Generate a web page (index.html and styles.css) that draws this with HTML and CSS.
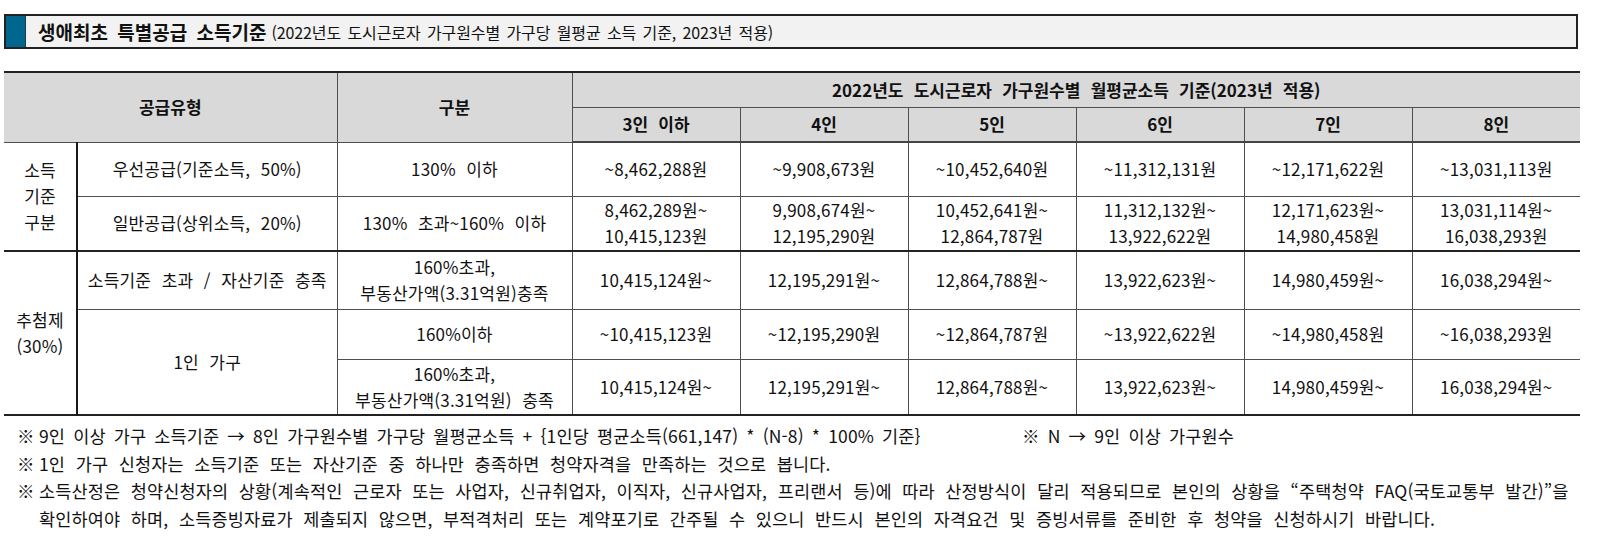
FILE: index.html
```html
<!DOCTYPE html>
<html lang="ko">
<head>
<meta charset="utf-8">
<title>생애최초 특별공급 소득기준</title>
<link rel="stylesheet" href="styles.css">
</head>
<body>
<div class="page">
  <div class="title-box">
    <div class="title-bar"></div>
    <div class="title-text"><strong>생애최초 특별공급 소득기준</strong> <span class="title-sub">(2022년도 도시근로자 가구원수별 가구당 월평균 소득 기준, 2023년 적용)</span></div>
  </div>

  <table class="grid">
    <colgroup>
      <col class="c-group"><col class="c-type"><col class="c-div">
      <col class="c-val"><col class="c-val"><col class="c-val"><col class="c-val"><col class="c-val"><col class="c-val">
    </colgroup>
    <thead>
      <tr class="h1">
        <th colspan="2" rowspan="2">공급유형</th>
        <th rowspan="2">구분</th>
        <th colspan="6">2022년도 도시근로자 가구원수별 월평균소득 기준(2023년 적용)</th>
      </tr>
      <tr class="h2">
        <th>3인 이하</th><th>4인</th><th>5인</th><th>6인</th><th>7인</th><th>8인</th>
      </tr>
    </thead>
    <tbody>
      <tr class="r1">
        <td rowspan="2" class="grp">소득<br>기준<br>구분</td>
        <td>우선공급(기준소득, 50%)</td>
        <td>130% 이하</td>
        <td>~8,462,288원</td><td>~9,908,673원</td><td>~10,452,640원</td><td>~11,312,131원</td><td>~12,171,622원</td><td>~13,031,113원</td>
      </tr>
      <tr class="r2">
        <td>일반공급(상위소득, 20%)</td>
        <td>130% 초과~160% 이하</td>
        <td>8,462,289원~<br>10,415,123원</td>
        <td>9,908,674원~<br>12,195,290원</td>
        <td>10,452,641원~<br>12,864,787원</td>
        <td>11,312,132원~<br>13,922,622원</td>
        <td>12,171,623원~<br>14,980,458원</td>
        <td>13,031,114원~<br>16,038,293원</td>
      </tr>
      <tr class="r3">
        <td rowspan="3" class="grp">추첨제<br>(30%)</td>
        <td>소득기준 초과 / 자산기준 충족</td>
        <td>160%초과,<br>부동산가액(3.31억원)충족</td>
        <td>10,415,124원~</td><td>12,195,291원~</td><td>12,864,788원~</td><td>13,922,623원~</td><td>14,980,459원~</td><td>16,038,294원~</td>
      </tr>
      <tr class="r4">
        <td rowspan="2">1인 가구</td>
        <td>160%이하</td>
        <td>~10,415,123원</td><td>~12,195,290원</td><td>~12,864,787원</td><td>~13,922,622원</td><td>~14,980,458원</td><td>~16,038,293원</td>
      </tr>
      <tr class="r5">
        <td>160%초과,<br>부동산가액(3.31억원) 충족</td>
        <td>10,415,124원~</td><td>12,195,291원~</td><td>12,864,788원~</td><td>13,922,623원~</td><td>14,980,459원~</td><td>16,038,294원~</td>
      </tr>
    </tbody>
  </table>

  <div class="notes">
    <div class="note note-tight">
      <span class="mark">※</span>
      <div class="note-body"><span class="note-main">9인 이상 가구 소득기준 → 8인 가구원수별 가구당 월평균소득 + {1인당 평균소득(661,147) * (N-8) * 100% 기준}</span><span class="note-side">※ N → 9인 이상 가구원수</span></div>
    </div>
    <div class="note">
      <span class="mark">※</span>
      <div class="note-body">1인 가구 신청자는 소득기준 또는 자산기준 중 하나만 충족하면 청약자격을 만족하는 것으로 봅니다.</div>
    </div>
    <div class="note">
      <span class="mark">※</span>
      <div class="note-body">소득산정은 청약신청자의 상황(계속적인 근로자 또는 사업자, 신규취업자, 이직자, 신규사업자, 프리랜서 등)에 따라 산정방식이 달리 적용되므로 본인의 상황을 “주택청약 FAQ(국토교통부 발간)”을<br>확인하여야 하며, 소득증빙자료가 제출되지 않으면, 부적격처리 또는 계약포기로 간주될 수 있으니 반드시 본인의 자격요건 및 증빙서류를 준비한 후 청약을 신청하시기 바랍니다.</div>
    </div>
  </div>
</div>
</body>
</html>
```

FILE: styles.css
```css
html, body {
  margin: 0;
  padding: 0;
  background: #ffffff;
}

body {
  font-family: "Noto Sans CJK KR", "Noto Sans", "Liberation Sans", sans-serif;
  color: #111111;
}

.page {
  padding: 14px 0 0 4px;
  width: 1574px;
}

/* Title */
.title-box {
  display: flex;
  align-items: stretch;
  height: 35px;
  box-sizing: border-box;
  border: 2px solid #222222;
  background: #f2f2f2;
}

.title-bar {
  width: 19px;
  background: #00668e;
  border-right: 1px solid #1d3c4a;
}

.title-text {
  display: flex;
  align-items: center;
  padding-left: 12px;
  font-size: 19px;
  word-spacing: 4px;
  white-space: nowrap;
}

.title-text strong {
  font-weight: 700;
  margin-right: 5px;
}

.title-sub {
  font-size: 16px;
  word-spacing: 2px;
  letter-spacing: -0.1px;
}

/* Table */
.grid {
  margin-top: 22px;
  width: 1574px;
  border-collapse: collapse;
  table-layout: fixed;
  font-size: 17px;
  word-spacing: 5.5px;
  border-top: 2px solid #222222;
  border-bottom: 2px solid #222222;
}

.c-group { width: 73px; }
.c-type { width: 260px; }
.c-div { width: 235px; }
.c-val { width: 168px; }

.grid th,
.grid td {
  border: 1px solid #4f4f4f;
  text-align: center;
  vertical-align: middle;
  padding: 0;
  line-height: 26px;
  white-space: nowrap;
}

.grid td {
  letter-spacing: 0.2px;
}

.grid th {
  background: #d9d9d9;
  font-weight: 700;
}

.grid tr > :first-child { border-left: none; }
.grid tr > :last-child { border-right: none; }
.grid .r2 > :first-child,
.grid .r4 > :first-child,
.grid .r5 > :first-child { border-left: 1px solid #4f4f4f; }

.grid .grp {
  border-right: 2px solid #1a1a1a;
}

.h1 { height: 35px; }
.h2 { height: 35px; }
.h2 th { border-bottom: 2px solid #444444; }
.r1 { height: 54px; }
.r2 { height: 55px; }
.r3 { height: 58px; }
.r3 td { border-top: 2px solid #222222; }
.r4 { height: 50px; }
.r5 { height: 56px; }

/* Notes */
.notes {
  margin-top: 6px;
  font-size: 17.5px;
  line-height: 27.5px;
  word-spacing: 5.5px;
  letter-spacing: 0.15px;
}

.note {
  display: flex;
  padding-left: 13px;
}

.note-tight .note-main,
.note-tight .note-side {
  word-spacing: 3px;
}

.mark {
  flex: 0 0 22px;
}

.note-body {
  white-space: nowrap;
}

.note-main {
  display: inline-block;
  width: 983px;
}
```
